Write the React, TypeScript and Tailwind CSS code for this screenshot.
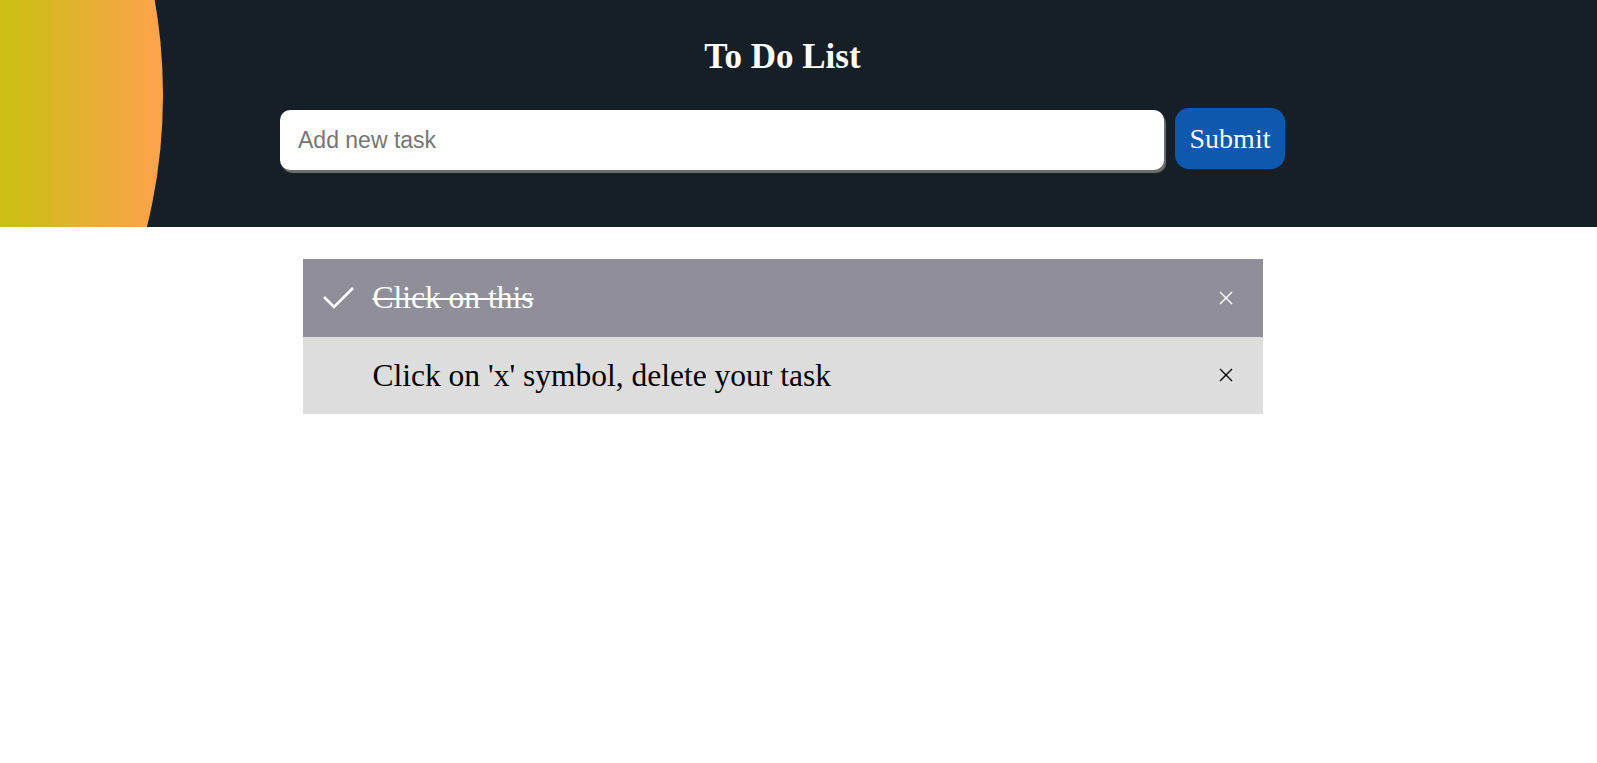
import { useState } from 'react';

interface Task {
  id: number;
  text: string;
  done: boolean;
}

const serif = "font-['Liberation_Serif','Times_New_Roman',serif]";

/** Thin check mark shown on finished tasks */
function CheckIcon() {
  return (
    <svg width="31" height="23" viewBox="0 0 31 23" fill="none" stroke="currentColor" strokeWidth={2.6}>
      <polyline points="1,11 11,21 30,2" />
    </svg>
  );
}

/** Small close cross */
function CloseIcon() {
  return (
    <svg width="14" height="14" viewBox="0 0 14 14" fill="none" stroke="currentColor" strokeWidth={1.4}>
      <path d="M1 1L13 13M13 1L1 13" />
    </svg>
  );
}

export default function App() {
  const [tasks, setTasks] = useState<Task[]>([
    { id: 1, text: 'Click on this', done: true },
    { id: 2, text: "Click on 'x' symbol, delete your task", done: false },
  ]);
  const [draft, setDraft] = useState('');

  const addTask = () => {
    const text = draft.trim();
    if (!text) return;
    setTasks([...tasks, { id: Date.now(), text, done: false }]);
    setDraft('');
  };

  return (
    <div className="min-h-screen bg-white">
      {/* Header with decorative circle */}
      <header className="relative h-[227px] overflow-hidden bg-[#161f26]">
        <div className="absolute left-[-937px] top-[-455px] h-[1100px] w-[1100px] rounded-full bg-[linear-gradient(to_right,#c8c010_85%,#fba449_99%)]" />
        <div className="relative flex flex-col items-center pr-[32px]">
          <h1 className={`${serif} pt-[37px] text-[35px] font-bold leading-[40px] text-white`}>
            To Do List
          </h1>
          <div className="mt-[31px] flex items-start">
            <input
              value={draft}
              onChange={(e) => setDraft(e.target.value)}
              onKeyDown={(e) => e.key === 'Enter' && addTask()}
              placeholder="Add new task"
              className="mt-[2px] h-[60px] w-[884px] rounded-[10px] bg-white px-[18px] font-['Liberation_Sans',Arial,sans-serif] text-[23px] text-black shadow-[2px_3px_1px_#6f6f6f] outline-none placeholder:text-[#757575]"
            />
            <button
              type="button"
              onClick={addTask}
              className={`${serif} ml-[11px] h-[61px] w-[110px] rounded-[14px] bg-[#0e58ad] text-[28px] text-white`}
            >
              Submit
            </button>
          </div>
        </div>
      </header>

      {/* Task list */}
      <main className="flex justify-center pr-[32px] pt-[32px]">
        <ul className="w-[960px]">
          {tasks.map((task) => (
            <li
              key={task.id}
              onClick={() =>
                setTasks(tasks.map((t) => (t.id === task.id ? { ...t, done: !t.done } : t)))
              }
              className={`flex h-[77.5px] cursor-pointer items-center pl-[20px] pr-[30px] ${
                task.done ? 'bg-[#908f99] text-white' : 'bg-[#dddddd] text-black'
              }`}
            >
              <span className="flex w-[31px] justify-center">{task.done && <CheckIcon />}</span>
              <span
                className={`${serif} ml-[19px] flex-1 text-[31.5px] leading-none ${
                  task.done ? 'line-through decoration-2' : ''
                }`}
              >
                {task.text}
              </span>
              <button
                type="button"
                onClick={(e) => {
                  e.stopPropagation();
                  setTasks(tasks.filter((t) => t.id !== task.id));
                }}
                className="flex h-[14px] w-[14px] items-center justify-center"
                aria-label="Delete task"
              >
                <CloseIcon />
              </button>
            </li>
          ))}
        </ul>
      </main>
    </div>
  );
}
